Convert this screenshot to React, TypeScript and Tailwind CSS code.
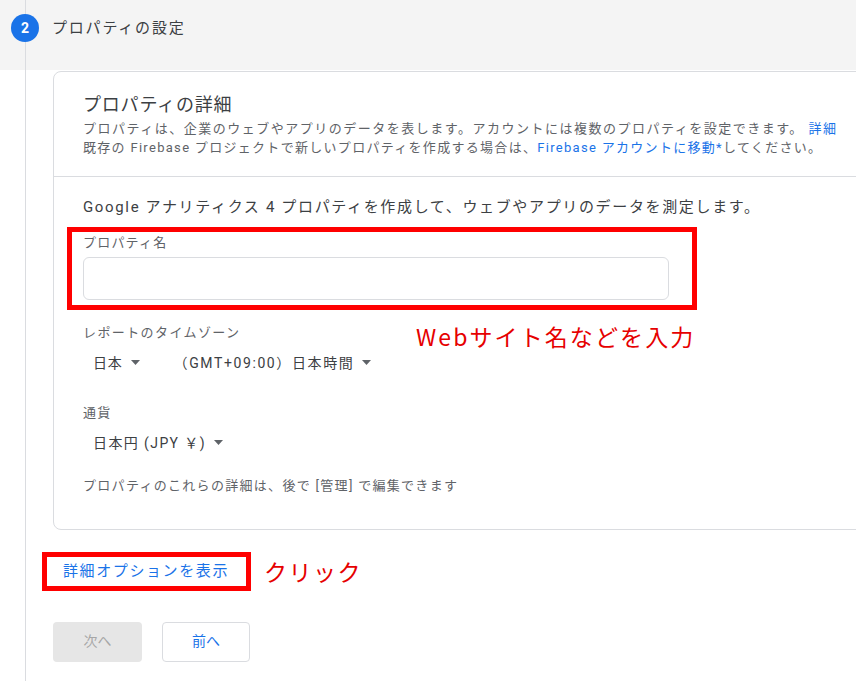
import React from "react";

function Caret(): React.JSX.Element {
  return (
    <svg width="9" height="5" viewBox="0 0 9 5" className="ml-[8px] inline-block">
      <path d="M0 0h9L4.5 5z" fill="#5f6368" />
    </svg>
  );
}

export default function App(): React.JSX.Element {
  return (
    <div className="relative w-[856px] h-[681px] overflow-hidden bg-white font-[Roboto,'Noto_Sans_CJK_JP',sans-serif] text-[#3c4043]">
      {/* stepper line */}
      <div className="absolute left-[25px] top-0 h-full w-px bg-[#dadce0]" />

      <div className="flex h-[70px] items-start bg-[#f4f4f4] pl-[11px] pt-[14px]">
        <div className="relative z-10 flex h-[28px] w-[28px] items-center justify-center rounded-full bg-[#1a73e8] text-[14px] font-bold text-white">
          2
        </div>
        <p className="ml-[13px] text-[15px] leading-[28px] tracking-[1.8px] text-[#3c4043]">
          プロパティの設定
        </p>
      </div>

      <div className="relative pl-[53px] pt-px">
        <div className="-mr-4 rounded-lg border border-[#dadce0] bg-white">
          <div className="px-[29px] pt-[21px] pb-[19px]">
            <p className="text-[18px] leading-[24px] tracking-[0.8px] text-[#3c4043]">
              プロパティの詳細
            </p>
            <p className="mt-[1.5px] text-[13px] leading-[19px] tracking-[1.5px] text-[#5f6368]">
              プロパティは、企業のウェブやアプリのデータを表します。アカウントには複数のプロパティを設定できます。{" "}
              <span className="text-[#1a73e8]">詳細</span>
            </p>
            <p className="text-[13px] leading-[19px] tracking-[1.3px] text-[#5f6368]">
              既存の Firebase プロジェクトで新しいプロパティを作成する場合は、
              <span className="text-[#1a73e8]">Firebase アカウントに移動*</span>
              してください。
            </p>
          </div>

          <div className="border-t border-[#dadce0] px-[29px] pt-[18px] pb-[33px]">
            <p className="text-[15px] leading-[24px] tracking-[1.65px] text-[#3c4043]">
              Google アナリティクス 4 プロパティを作成して、ウェブやアプリのデータを測定します。
            </p>

            <div className="-ml-[16px] mt-[8px] w-[630px] border-[5px] border-[#ff0000] pl-[11px] pt-[2px] pb-[5px]">
              <p className="text-[13px] leading-[18px] tracking-[1.2px] text-[#5f6368]">
                プロパティ名
              </p>
              <div className="mt-[5px] h-[43px] w-[586px] rounded-md border border-[#dadce0] bg-white" />
            </div>

            <div className="relative">
              <p className="mt-[14px] text-[13px] leading-[18px] tracking-[1.4px] text-[#5f6368]">
                レポートのタイムゾーン
              </p>
              <p className="absolute left-[333px] top-[-4px] font-['Noto_Sans_CJK_JP',sans-serif] text-[23px] leading-[32px] tracking-[2.1px] text-[#e60000]">
                Webサイト名などを入力
              </p>
            </div>

            <div className="mt-[9px] flex items-center pl-[10px] text-[14px] leading-[24px] tracking-[0.8px] text-[#3c4043]">
              <span className="flex items-center">
                日本
                <Caret />
              </span>
              <span className="ml-[34px] flex items-center tracking-[1.6px]">
                （GMT+09:00）日本時間
                <Caret />
              </span>
            </div>

            <p className="mt-[29px] text-[13px] leading-[18px] tracking-[1.2px] text-[#5f6368]">
              通貨
            </p>
            <div className="mt-[9px] flex items-center pl-[10px] text-[14px] leading-[24px] tracking-[1.4px] text-[#3c4043]">
              日本円 (JPY ￥)
              <Caret />
            </div>

            <p className="mt-[21px] text-[13px] leading-[20px] tracking-[1.3px] text-[#5f6368]">
              プロパティのこれらの詳細は、後で [管理] で編集できます
            </p>
          </div>
        </div>

        <div className="-ml-[11px] mt-[22px] flex items-center gap-[13px]">
          <div className="flex h-[39px] w-[209px] items-center border-[5px] border-[#ff0000] pl-[16px]">
            <span className="text-[15px] leading-[20px] tracking-[1.6px] text-[#1a73e8]">
              詳細オプションを表示
            </span>
          </div>
          <span className="font-['Noto_Sans_CJK_JP',sans-serif] text-[23px] leading-[32px] tracking-[1.5px] text-[#e60000]">
            クリック
          </span>
        </div>

        <div className="mt-[31px] flex gap-[20px]">
          <div className="flex h-[40px] w-[89px] items-center justify-center rounded bg-[#e6e6e6] text-[14px] text-[#a6a6a6]">
            次へ
          </div>
          <div className="flex h-[40px] w-[88px] items-center justify-center rounded border border-[#dadce0] bg-white text-[14px] text-[#1a73e8]">
            前へ
          </div>
        </div>
      </div>
    </div>
  );
}
